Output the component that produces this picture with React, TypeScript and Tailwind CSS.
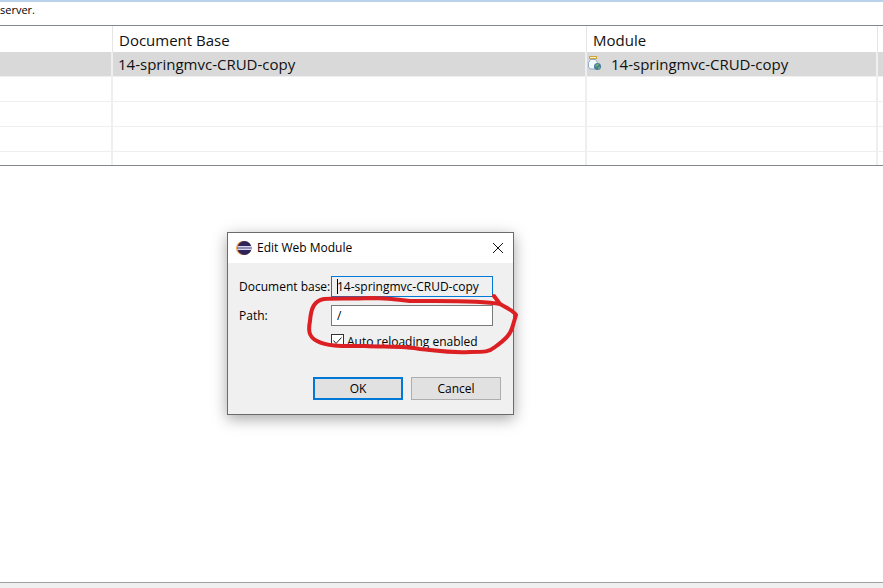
const cell = "border-r-2 border-[#efefef] px-[5px] font-normal whitespace-nowrap";
const headCell = "border-r border-[#e5e5e5] px-[6px] pt-[2px] font-normal whitespace-nowrap";

function ModuleIcon() {
  return (
    <svg width="16" height="16" viewBox="0 0 16 16" className="mb-[2px] shrink-0" aria-hidden="true">
      <path d="M3.500 4.500h5l2 3v5l-1.500 1.500H3L1.500 12V7.500z" fill="#f4f9ff" stroke="#8fabc6" />
      <rect x="2.500" y="1.500" width="7" height="2" fill="#fff3c8" stroke="#d0a43c" />
      <circle cx="10.500" cy="11.500" r="3.500" fill="#457a98" />
      <path d="M8 10.500c1-2 3-2 4-1.500l-1 2-2 1zM11 12.500l2-1v2l-2 1z" fill="#6fab74" />
    </svg>
  );
}

function EclipseIcon() {
  return (
    <svg width="16" height="16" viewBox="0 0 16 16" className="shrink-0" aria-hidden="true">
      <circle cx="7" cy="8" r="7" fill="#f0a04b" />
      <circle cx="8.500" cy="8" r="7" fill="#2e2459" />
      <path d="M1.800 6.500h13.400M1.500 9.500h14" stroke="#d9d8ea" strokeWidth="1" />
      <path d="M1.500 8h14" stroke="#8f8bb5" strokeWidth="2" />
    </svg>
  );
}

function ModulesTable() {
  return (
    <div className="h-[141px] overflow-hidden border-y border-[#828790]">
      <table className="w-full table-fixed border-separate border-spacing-0 text-left text-[15px] leading-6 text-[#111]">
        <colgroup>
          <col className="w-[113px]" />
          <col />
          <col className="w-[291px]" />
          <col className="w-[5px]" />
        </colgroup>
        <thead>
          <tr className="h-[26px]">
            <th className={headCell} aria-label="Path" />
            <th className={headCell}>Document Base</th>
            <th className={headCell}>Module</th>
            <td />
          </tr>
        </thead>
        <tbody>
          <tr className="h-[25px] bg-[#d9d9d9]">
            <td className={`${cell} border-b`} />
            <td className={`${cell} border-b`}>14-springmvc-CRUD-copy</td>
            <td className="border-r-2 border-b border-[#efefef] whitespace-nowrap">
              <div className="flex items-center gap-2">
                <ModuleIcon />
                <span>14-springmvc-CRUD-copy</span>
              </div>
            </td>
            <td className="border-b border-[#efefef]" />
          </tr>
          {[0, 1, 2, 3].map((row) => (
            <tr key={row} className="h-[25px]">
              <td className={`${cell} border-b`} />
              <td className={`${cell} border-b`} />
              <td className={`${cell} border-b`} />
              <td className="border-b border-[#efefef]" />
            </tr>
          ))}
        </tbody>
      </table>
    </div>
  );
}

// Hand-drawn marker round the path field
function RedMarker() {
  return (
    <svg
      width="230"
      height="80"
      viewBox="300 285 230 80"
      className="pointer-events-none absolute top-[52px] left-[72px]"
      fill="none"
      stroke="#dc1f22"
      strokeWidth="4"
      strokeLinecap="round"
      strokeLinejoin="round"
      aria-hidden="true"
    >
      <path d="M494 296L500 304C480 300 440 301 410 301C395 299 385 298 370 298C350 299 335 298 324 299C314 301 311 308 310 321C308 331 309 337 317 341C328 347 345 346 365 346C385 347 405 346 420 349C440 351 448 353 470 352C485 352 489 352 495 347C506 339 511 334 513 325L516 315C514 311 507 308 500 304" />
    </svg>
  );
}

function EditModuleDialog() {
  return (
    <div
      role="dialog"
      aria-labelledby="dialog-title"
      className="absolute top-[232px] left-[227px] w-[287px] border border-[#6b6b6b] bg-[#f0f0f0] text-[12px] leading-4 text-black shadow-[0_4px_14px_rgba(0,0,0,0.35)]"
    >
      <header className="flex h-[30px] items-center gap-[5px] bg-white pr-[7px] pl-2">
        <EclipseIcon />
        <h1 id="dialog-title" className="flex-1">Edit Web Module</h1>
        <button type="button" aria-label="Close" className="flex h-4 w-4 items-center justify-center">
          <svg width="12" height="12" viewBox="0 0 12 12" stroke="#111" aria-hidden="true">
            <path d="M1 1l10 10M11 1L1 11" />
          </svg>
        </button>
      </header>
      <form className="pt-[13px] pr-3 pb-[14px] pl-[11px]" onSubmit={(e) => e.preventDefault()}>
        <div className="grid grid-cols-[92px_162px] items-center gap-y-2">
          <label htmlFor="doc-base" className="whitespace-nowrap">Document base:</label>
          <div className="relative">
            <input
              id="doc-base"
              readOnly
              defaultValue="14-springmvc-CRUD-copy"
              className="block h-[21px] w-full border border-[#0078d7] bg-[#f0f0f0] px-[5px] outline-none"
            />
            <span className="absolute top-[3px] left-[6px] h-[15px] w-px bg-black" />
          </div>
          <label htmlFor="path">Path:</label>
          <input
            id="path"
            defaultValue="/"
            className="block h-[21px] w-full border border-[#7a7a7a] bg-white px-[5px] outline-none"
          />
          <label className="col-start-2 flex items-start gap-[3px] whitespace-nowrap">
            <span className="relative flex">
              <input
                type="checkbox"
                defaultChecked
                className="peer h-[13px] w-[13px] appearance-none border border-[#333] bg-white"
              />
              <svg
                width="13"
                height="13"
                viewBox="0 0 13 13"
                className="pointer-events-none absolute inset-0 hidden peer-checked:block"
                fill="none"
                stroke="#222"
                aria-hidden="true"
              >
                <path d="M2.500 6.500L5 9.500L10.500 3.500" />
              </svg>
            </span>
            Auto reloading enabled
          </label>
        </div>
        <div className="mt-[27px] flex justify-end gap-2">
          <button type="submit" className="h-[23px] w-[90px] border-2 border-[#0078d7] bg-[#e1e1e1]">
            OK
          </button>
          <button type="button" className="h-[23px] w-[90px] border border-[#adadad] bg-[#e1e1e1]">
            Cancel
          </button>
        </div>
      </form>
      <RedMarker />
    </div>
  );
}

export default function App() {
  return (
    <div className="relative flex min-h-screen flex-col overflow-hidden bg-white font-['Open_Sans','Noto_Sans',sans-serif]">
      <div className="h-[25px] border-t-2 border-[#b9d1ea] text-[11px] leading-4 text-black">server.</div>
      <ModulesTable />
      <main className="flex-1" />
      <footer className="h-[6px] border-t border-[#a0a0a0] bg-[#f0f0f0]" />
      <EditModuleDialog />
    </div>
  );
}
